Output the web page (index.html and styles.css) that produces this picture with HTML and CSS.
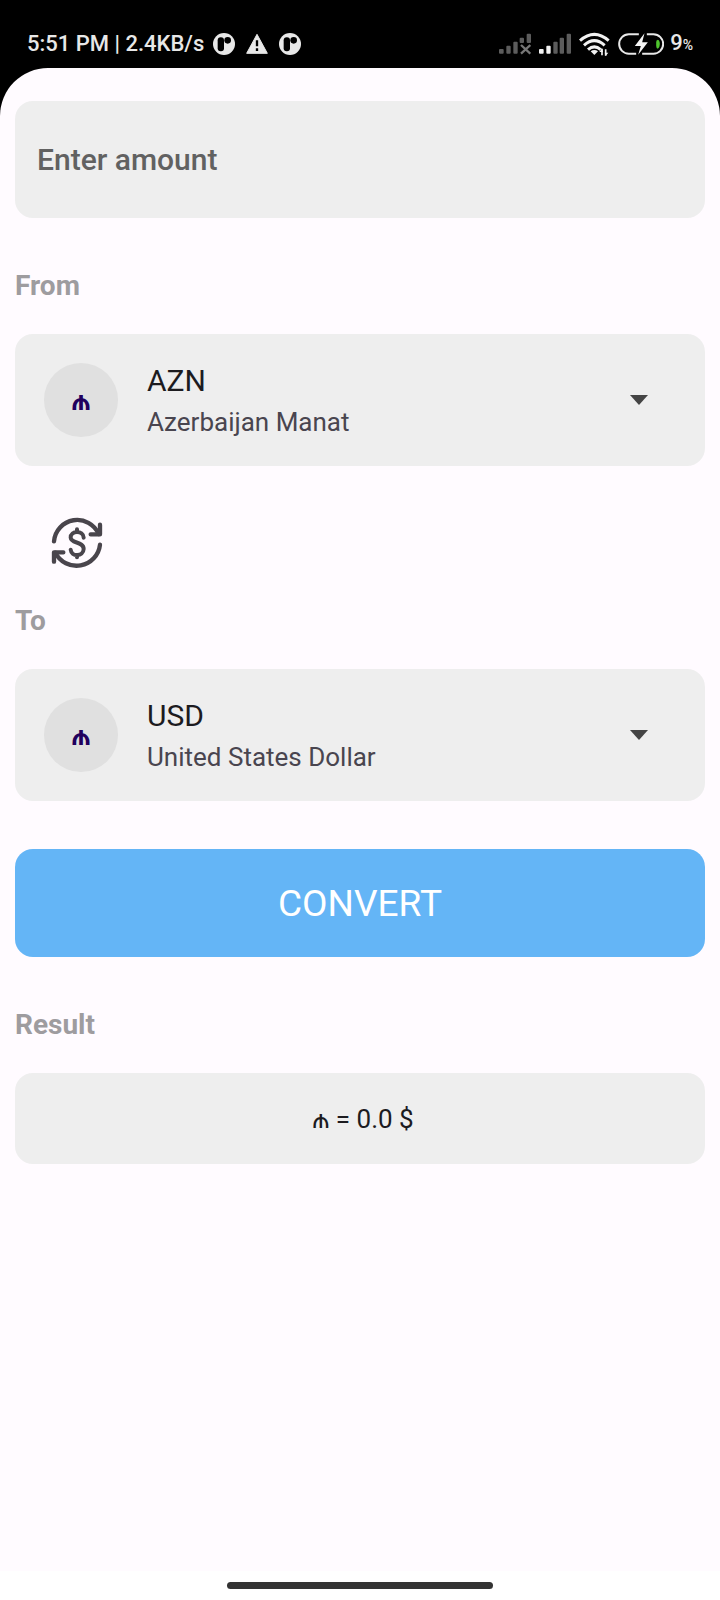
FILE: index.html
```html
<!DOCTYPE html>
<html lang="en">
<head>
<meta charset="utf-8">
<meta name="viewport" content="width=device-width, initial-scale=1">
<title>Currency converter</title>
<link rel="stylesheet" href="styles.css">
</head>
<body>
<div class="screen">
  <header class="status">
    <span class="status-text">5:51 PM | 2.4KB/s</span>
    <svg class="notice" viewBox="0 0 66 66" width="22" height="22" aria-hidden="true"><circle cx="33" cy="33" r="33" fill="#e8e8e8"/><rect x="14" y="13" width="19" height="42" rx="9" fill="#000"/><circle cx="44" cy="22" r="10" fill="#000"/></svg>
    <svg class="notice" viewBox="0 0 66 66" width="22" height="22" aria-hidden="true"><path d="M33 4 64 61H2z" fill="#e8e8e8" stroke="#e8e8e8" stroke-width="3" stroke-linejoin="round"/><path d="M33 22v18M33 46v8" stroke="#000" stroke-width="7"/></svg>
    <svg class="notice" viewBox="0 0 66 66" width="22" height="22" aria-hidden="true"><circle cx="33" cy="33" r="33" fill="#e8e8e8"/><rect x="14" y="13" width="19" height="42" rx="9" fill="#000"/><circle cx="44" cy="22" r="10" fill="#000"/></svg>
    <div class="status-right">
      <svg viewBox="0 0 96 66" width="32" height="22" aria-hidden="true"><g fill="#5c5c5c"><rect x="0" y="48" width="14" height="14" rx="3"/><rect x="22" y="38" width="13" height="24" rx="3"/><rect x="43" y="26" width="13" height="36" rx="3"/><rect x="62" y="14" width="13" height="16" rx="3"/><rect x="83" y="2" width="13" height="28" rx="3"/></g><path d="M66 36 94 62M94 36 66 62" stroke="#777" stroke-width="7"/></svg>
      <svg viewBox="0 0 96 66" width="32" height="22" aria-hidden="true"><g fill="#f2f2f2"><rect x="0" y="48" width="14" height="14" rx="3"/><rect x="22" y="38" width="13" height="24" rx="3"/></g><g fill="#5c5c5c"><rect x="43" y="26" width="13" height="36" rx="3"/><rect x="62" y="14" width="13" height="48" rx="3"/><rect x="83" y="2" width="13" height="60" rx="3"/></g></svg>
      <svg class="wifi" viewBox="0 0 93 72" width="31" height="24" aria-hidden="true"><g fill="none" stroke="#f2f2f2" stroke-width="9"><path d="M3 26Q46-12 89 26"/><path d="M15 40Q46 12 77 40"/><path d="M27 53Q46 36 65 53"/></g><path d="M35 58Q46 50 57 58L46 69z" fill="#f2f2f2"/><path d="M69 70V50M80 52V71" stroke="#f2f2f2" stroke-width="5"/><path d="M61 60 69 49 72 60zM77 62 88 62 80 72z" fill="#f2f2f2"/></svg>
      <svg viewBox="0 0 137 66" width="46" height="22" aria-hidden="true"><path d="M62 4H32a28 28 0 0 0 0 58H54M86 4h20a28 28 0 0 1 0 58H72" fill="none" stroke="#e8e8e8" stroke-width="6"/><path d="M79 1 50 39H68L60 65 89 28H72z" fill="#f4f4f4"/><path d="M119 20q-5 1-5 8v10q0 8 5 9 6-3 6-14t-6-13z" fill="#4fc52e"/></svg>
      <span class="battery-text">9<small>%</small></span>
    </div>
  </header>

  <main class="sheet">
    <form class="converter">
      <input class="amount" type="text" inputmode="decimal" placeholder="Enter amount" aria-label="Enter amount">

      <label class="caption" for="from">From</label>
      <div class="currency">
        <span class="badge" aria-hidden="true">₼</span>
        <div class="choice">
          <select id="from" class="code"><option selected>AZN</option><option>USD</option></select>
          <span class="name">Azerbaijan Manat</span>
        </div>
        <svg class="arrow" viewBox="0 0 18 10" width="18" height="10" aria-hidden="true"><path d="M0 0H18L9 10z" fill="#444"/></svg>
      </div>

      <button class="swap" type="button" aria-label="Swap currencies">
        <svg viewBox="63 51 156 156" width="52" height="52" fill="none" stroke="#49454c" stroke-width="13" stroke-linecap="round" stroke-linejoin="round" aria-hidden="true"><path d="M72 124A70 70 0 0 1 206 102"/><path d="M210 74V103H182"/><path d="M210 134A71 71 0 0 1 76 158"/><path d="M72 185V157H100"/><path d="M161 113C160 90 121 91 122 113 123 132 161 123 161 147 160 171 124 171 122 149M141 88V96M141 165V172" stroke-width="12"/></svg>
      </button>

      <label class="caption" for="to">To</label>
      <div class="currency">
        <span class="badge" aria-hidden="true">₼</span>
        <div class="choice">
          <select id="to" class="code"><option>AZN</option><option selected>USD</option></select>
          <span class="name">United States Dollar</span>
        </div>
        <svg class="arrow" viewBox="0 0 18 10" width="18" height="10" aria-hidden="true"><path d="M0 0H18L9 10z" fill="#444"/></svg>
      </div>

      <button class="convert" type="button">CONVERT</button>

      <label class="caption" for="result">Result</label>
      <output id="result" class="result">₼ = 0.0 $</output>
    </form>
  </main>

  <footer class="nav"><div class="handle"></div></footer>
</div>
</body>
</html>
```
FILE: styles.css
```css
* {
  box-sizing: border-box;
}

body {
  margin: 0;
  background: #000;
  font-family: Roboto, "Noto Sans", sans-serif;
  color: #1c1b1f;
}

button,
input,
select {
  margin: 0;
  border: 0;
  font: inherit;
  color: inherit;
}

svg {
  display: block;
  flex: none;
}

.screen {
  display: flex;
  flex-direction: column;
  min-height: 100vh;
}

.status {
  display: flex;
  align-items: center;
  height: 68px;
  padding: 19px 27px 0;
  color: #e8e8e8;
  font-size: 22px;
  font-weight: 500;
  line-height: 28px;
}

.status-text {
  margin-right: 9px;
}

.notice + .notice {
  margin-left: 11px;
}

.status-right {
  display: flex;
  align-items: center;
  gap: 8px;
  margin-left: auto;
}

.battery-text {
  margin-left: -2px;
}

.battery-text small {
  font-size: 14px;
}

.sheet {
  flex: 1;
  padding: 33px 15px;
  border-radius: 48px 48px 0 0;
  background: #fffbff;
}

.converter {
  display: flex;
  flex-direction: column;
}

.amount {
  width: 100%;
  height: 117px;
  padding: 0 22px;
  border-radius: 18px;
  background: #eee;
  font-size: 30px;
  font-weight: 500;
}

.amount::placeholder {
  color: #616161;
  opacity: 1;
}

.caption {
  margin: 50px 0 30px;
  color: #9e9c9f;
  font-size: 28px;
  font-weight: 700;
  line-height: 36px;
}

.currency {
  display: flex;
  align-items: center;
  height: 132px;
  padding: 0 57px 0 29px;
  border-radius: 18px;
  background: #eee;
}

.badge {
  display: grid;
  place-items: center;
  width: 74px;
  height: 74px;
  margin-right: 29px;
  border-radius: 50%;
  background: #e0e0e0;
  color: #21005d;
  font-size: 28px;
  font-weight: 600;
}

.choice {
  flex: 1;
  display: flex;
  flex-direction: column;
}

.code {
  appearance: none;
  width: 100%;
  padding: 0;
  background: transparent;
  font-size: 30px;
  line-height: 44px;
}

.name {
  color: #49454f;
  font-size: 26px;
  line-height: 38px;
}

.swap {
  display: grid;
  place-items: center;
  width: 88px;
  height: 88px;
  margin: 33px 0 0 18px;
  padding: 0;
  background: transparent;
}

.swap + .caption {
  margin-top: 16px;
}

.convert {
  height: 108px;
  margin-top: 48px;
  border-radius: 18px;
  background: #64b5f6;
  color: #fff;
  font-size: 37px;
}

.result {
  display: grid;
  place-items: center;
  height: 91px;
  padding-left: 6px;
  border-radius: 18px;
  background: #eee;
  font-size: 26px;
}

.nav {
  display: flex;
  justify-content: center;
  height: 29px;
  padding-top: 11px;
  background: #fff;
}

.handle {
  width: 37%;
  height: 7px;
  border-radius: 4px;
  background: #333;
}
```
